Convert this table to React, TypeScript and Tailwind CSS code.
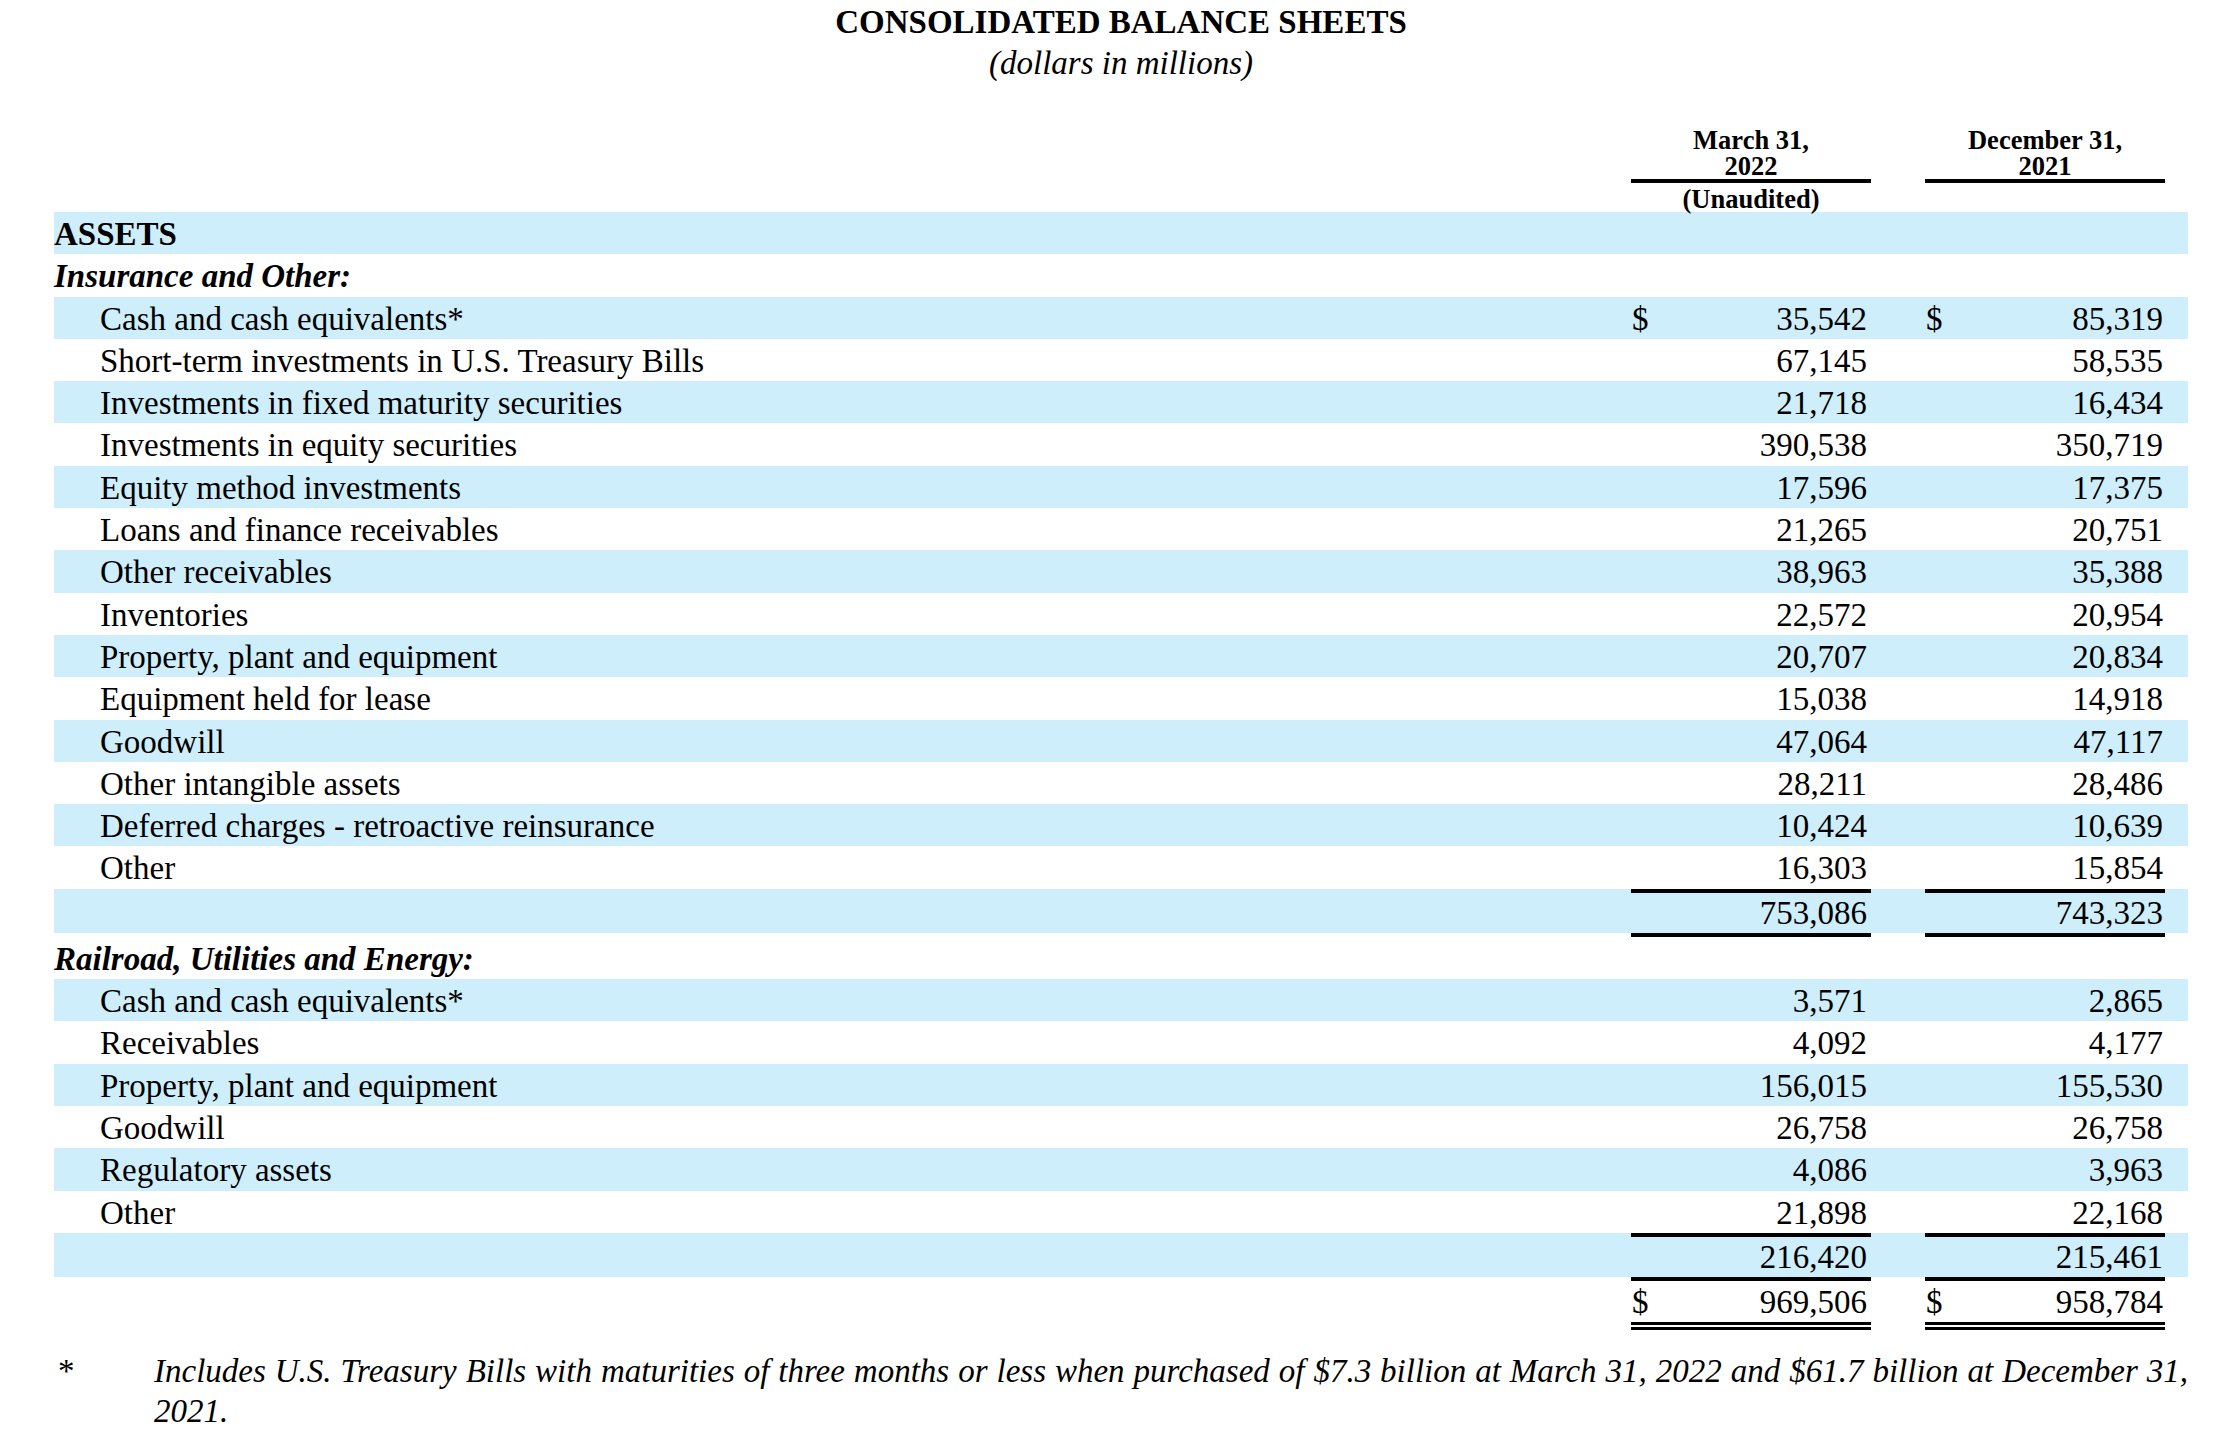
import React from "react";

type Item = { label: string; a: string; b: string; dollar?: boolean };

const insurance: Item[] = [
  { label: "Cash and cash equivalents*", a: "35,542", b: "85,319", dollar: true },
  { label: "Short-term investments in U.S. Treasury Bills", a: "67,145", b: "58,535" },
  { label: "Investments in fixed maturity securities", a: "21,718", b: "16,434" },
  { label: "Investments in equity securities", a: "390,538", b: "350,719" },
  { label: "Equity method investments", a: "17,596", b: "17,375" },
  { label: "Loans and finance receivables", a: "21,265", b: "20,751" },
  { label: "Other receivables", a: "38,963", b: "35,388" },
  { label: "Inventories", a: "22,572", b: "20,954" },
  { label: "Property, plant and equipment", a: "20,707", b: "20,834" },
  { label: "Equipment held for lease", a: "15,038", b: "14,918" },
  { label: "Goodwill", a: "47,064", b: "47,117" },
  { label: "Other intangible assets", a: "28,211", b: "28,486" },
  { label: "Deferred charges - retroactive reinsurance", a: "10,424", b: "10,639" },
  { label: "Other", a: "16,303", b: "15,854" },
];

const railroad: Item[] = [
  { label: "Cash and cash equivalents*", a: "3,571", b: "2,865" },
  { label: "Receivables", a: "4,092", b: "4,177" },
  { label: "Property, plant and equipment", a: "156,015", b: "155,530" },
  { label: "Goodwill", a: "26,758", b: "26,758" },
  { label: "Regulatory assets", a: "4,086", b: "3,963" },
  { label: "Other", a: "21,898", b: "22,168" },
];

function Cell({ v, dollar, second }: { v: string; dollar?: boolean; second?: boolean }) {
  return (
    <div className={`w-[240px] flex justify-between ${second ? "pr-[2px]" : "pr-[4px]"}`}>
      <span className="pl-[1px]">{dollar ? "$" : ""}</span>
      <span>{v}</span>
    </div>
  );
}

function ItemRow({ item, blue }: { item: Item; blue: boolean }) {
  return (
    <div className={`flex h-[42.3px] leading-[44px] ${blue ? "bg-[#cfeefb]" : ""}`}>
      <div className="flex-1 pl-[46px] whitespace-nowrap">{item.label}</div>
      <Cell v={item.a} dollar={item.dollar} />
      <div className="w-[54px]" />
      <Cell v={item.b} dollar={item.dollar} second />
      <div className="w-[23px]" />
    </div>
  );
}

function SectionRow({ label, blue, bold, italic }: { label: string; blue?: boolean; bold?: boolean; italic?: boolean }) {
  return (
    <div
      className={`flex h-[42.3px] leading-[44px] ${blue ? "bg-[#cfeefb]" : ""} ${bold ? "font-bold" : ""} ${italic ? "italic" : ""}`}
    >
      <div className="flex-1 whitespace-nowrap">{label}</div>
    </div>
  );
}

function Subtotal({ a, b }: { a: string; b: string }) {
  return (
    <div>
      <div className="flex h-[44px] bg-[#cfeefb]">
        <div className="flex-1" />
        <div className="w-[240px] border-t-4 border-black leading-[41px] text-right pr-[4px]">{a}</div>
        <div className="w-[54px]" />
        <div className="w-[240px] border-t-4 border-black leading-[41px] text-right pr-[2px]">{b}</div>
        <div className="w-[23px]" />
      </div>
      <div className="flex h-[4px]">
        <div className="flex-1" />
        <div className="w-[240px] bg-black" />
        <div className="w-[54px]" />
        <div className="w-[240px] bg-black" />
        <div className="w-[23px]" />
      </div>
    </div>
  );
}

export default function App() {
  return (
    <div
      className="bg-white text-black min-h-[1440px] pl-[54px] pr-[51px] pt-[3px] text-[33px]"
      style={{ fontFamily: '"Liberation Serif", "Times New Roman", serif' }}
    >
      <div className="text-center font-bold leading-[38px]">CONSOLIDATED BALANCE SHEETS</div>
      <div className="text-center italic leading-[39px] mt-[3px]">(dollars in millions)</div>

      <div className="flex mt-[44px] font-bold text-[26.5px] leading-[26px] text-center">
        <div className="flex-1" />
        <div className="w-[240px]">
          <div className="border-b-4 border-black">
            <div>March 31,</div>
            <div>2022</div>
          </div>
          <div className="pt-[3px]">(Unaudited)</div>
        </div>
        <div className="w-[54px]" />
        <div className="w-[240px]">
          <div className="border-b-4 border-black">
            <div>December 31,</div>
            <div>2021</div>
          </div>
        </div>
        <div className="w-[23px]" />
      </div>

      <div>
        <SectionRow label="ASSETS" blue bold />
        <SectionRow label="Insurance and Other:" bold italic />
        {insurance.map((it, i) => (
          <ItemRow key={"i" + i} item={it} blue={i % 2 === 0} />
        ))}
        <Subtotal a="753,086" b="743,323" />
        <SectionRow label="Railroad, Utilities and Energy:" bold italic />
        {railroad.map((it, i) => (
          <ItemRow key={"r" + i} item={it} blue={i % 2 === 0} />
        ))}
        <Subtotal a="216,420" b="215,461" />
        <div className="flex">
          <div className="flex-1" />
          <div className="w-[240px] h-[49px] border-b-[8px] border-double border-black leading-[42px] flex justify-between pr-[4px]">
            <span className="pl-[1px]">$</span>
            <span>969,506</span>
          </div>
          <div className="w-[54px]" />
          <div className="w-[240px] h-[49px] border-b-[8px] border-double border-black leading-[42px] flex justify-between pr-[2px]">
            <span className="pl-[1px]">$</span>
            <span>958,784</span>
          </div>
          <div className="w-[23px]" />
        </div>
      </div>

      <div className="flex mt-[21px] italic leading-[40px]">
        <div className="w-[100px] shrink-0 not-italic pl-[4px]">*</div>
        <div className="flex-1 text-justify">
          Includes U.S. Treasury Bills with maturities of three months or less when purchased of $7.3 billion at March
          31, 2022 and $61.7 billion at December 31, 2021.
        </div>
      </div>
    </div>
  );
}
